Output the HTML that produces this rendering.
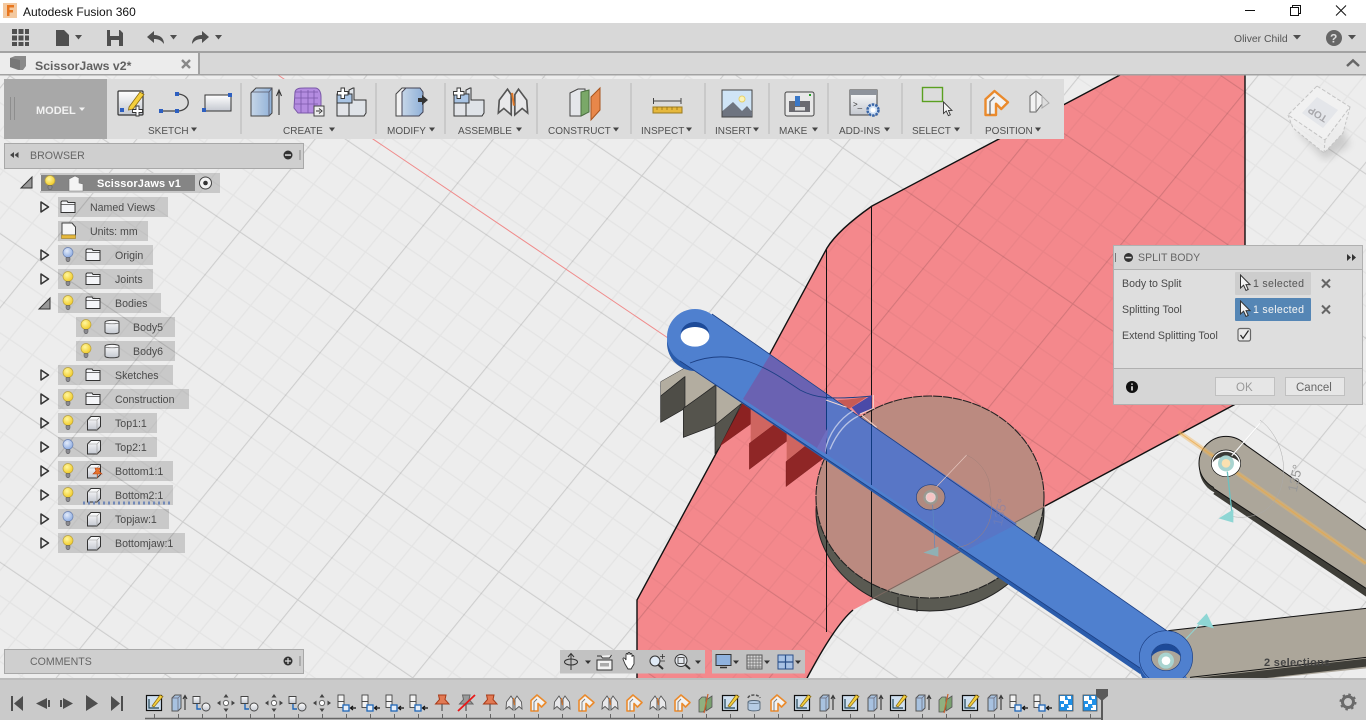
<!DOCTYPE html>
<html><head><meta charset="utf-8"><title>Autodesk Fusion 360</title>
<style>
html,body{margin:0;padding:0;width:1366px;height:720px;overflow:hidden;background:#ededed}
svg{display:block;position:absolute;left:0;top:0}
text{font-family:"Liberation Sans",sans-serif;font-size:11px;fill:#4a4a4a}
.tb{font-size:10px;fill:#505050}
.tr{font-size:10.6px;fill:#4a4a4a}
</style></head><body>
<svg width="1366" height="720" viewBox="0 0 1366 720" xmlns="http://www.w3.org/2000/svg">
<defs>
<pattern id="grid" patternUnits="userSpaceOnUse" width="100" height="100" patternTransform="matrix(1.15 .78 .86 -1.06 1158 198)">
<path d="M20 0V100M40 0V100M60 0V100M80 0V100M0 20H100M0 40H100M0 60H100M0 80H100" stroke="#000" stroke-opacity=".04" stroke-width=".9" fill="none"/>
<path d="M0 0V100M0 0H100" stroke="#000" stroke-opacity=".13" stroke-width="1.6" fill="none"/>
</pattern>
<clipPath id="redc"><path d="M1120 75L1245 75L1245 399L853 610Q835 625 806 680L637 680L637 600L827 248Q838 230 872 206Z"/></clipPath>
<filter id="bl"><feGaussianBlur stdDeviation="4"/></filter>
<linearGradient id="gb" x1="0" y1="0" x2="1" y2="0"><stop offset="0" stop-color="#c6d6e8"/><stop offset="1" stop-color="#8fb0d8"/></linearGradient>
<linearGradient id="gw" x1="0" y1="0" x2="0" y2="1"><stop offset="0" stop-color="#fff"/><stop offset="1" stop-color="#c4c8d0"/></linearGradient>
<radialGradient id="gy" cx=".4" cy=".35" r=".7"><stop offset="0" stop-color="#fff7a0"/><stop offset="1" stop-color="#f0c820"/></radialGradient>
<radialGradient id="gbb" cx=".4" cy=".35" r=".7"><stop offset="0" stop-color="#e4ecfa"/><stop offset="1" stop-color="#88a8e0"/></radialGradient>

<symbol id="bulby" viewBox="0 0 12 16"><circle cx="6" cy="5.5" r="5" fill="url(#gy)" stroke="#b8a040" stroke-width=".7"/><path d="M4 10.5h4v2.6l-1 1.6h-2l-1-1.6z" fill="#8a8a90" stroke="#555" stroke-width=".5"/></symbol>
<symbol id="bulbb" viewBox="0 0 12 16"><circle cx="6" cy="5.5" r="5" fill="url(#gbb)" stroke="#6a80b0" stroke-width=".7"/><path d="M4 10.5h4v2.6l-1 1.6h-2l-1-1.6z" fill="#8a8a90" stroke="#555" stroke-width=".5"/></symbol>
<symbol id="folder" viewBox="0 0 16 14"><path d="M1 3V12.5H15V2.5H8L7 1H2L1 2Z" fill="#f4f5f8" stroke="#333" stroke-width="1"/><path d="M1 4.5H15" stroke="#333" stroke-width=".7"/></symbol>
<symbol id="bodyc" viewBox="0 0 16 16"><path d="M1.500 5L5 1.500H14.500V11.500L11 15H1.500Z" fill="url(#gw)" stroke="#333" stroke-width="1"/><path d="M11 15V5H1.500M11 5L14.500 1.500" stroke="#999" stroke-width=".6" fill="none"/></symbol>
<symbol id="cyl" viewBox="0 0 16 16"><path d="M1 3.200C1 .8 15 .8 15 3.200V13C15 15.400 1 15.400 1 13Z" fill="url(#gw)" stroke="#444" stroke-width="1"/><path d="M1 3.200C1 5.400 15 5.400 15 3.200" stroke="#666" stroke-width=".6" fill="none"/></symbol>
<symbol id="arr" viewBox="0 0 10 12"><path d="M1 1L8.500 6L1 11Z" fill="#ececec" stroke="#333" stroke-width="1.500" stroke-linejoin="round"/></symbol>

<symbol id="t-sk" viewBox="0 0 24 24"><rect x="4.500" y="4.500" width="15" height="15" fill="#cfe0f0" stroke="#111" stroke-width="1.200"/><path d="M7 8V17H17" stroke="#245" stroke-width="1.200" fill="none"/><path d="M10 15L18 4L21 5.500L12 16Z" fill="#f4d040" stroke="#8a6a10" stroke-width=".7"/></symbol>
<symbol id="t-ex" viewBox="0 0 24 24"><path d="M6 7L9 4H15V17L12 20H6Z" fill="#a8c2e0" stroke="#555" stroke-width="1"/><path d="M12 20V7H6M12 7L15 4" stroke="#667" stroke-width=".7" fill="none"/><path d="M19 19V6M17 8L19 4.500L21 8" stroke="#333" stroke-width="1.100" fill="none"/></symbol>
<symbol id="t-cb" viewBox="0 0 24 24"><path d="M3 5.500h7v7h-7z" fill="url(#gw)" stroke="#444" stroke-width=".9"/><circle cx="16" cy="16" r="4" fill="url(#gw)" stroke="#444" stroke-width=".9"/><path d="M7 13V18H11" stroke="#1f66b8" stroke-width="1.400" fill="none"/></symbol>
<symbol id="t-mv" viewBox="0 0 24 24"><path d="M12 3L14.500 6.500H9.500ZM12 21L14.500 17.500H9.500ZM3 12L6.500 9.500V14.500ZM21 12L17.500 9.500V14.500Z" fill="#444"/><circle cx="12" cy="12" r="2.600" fill="#fff" stroke="#666"/></symbol>
<symbol id="t-al" viewBox="0 0 24 24"><rect x="4" y="4" width="6" height="6.500" fill="#f2f2f2" stroke="#444" stroke-width=".9"/><rect x="4" y="10.500" width="6" height="6" fill="#f2f2f2" stroke="#444" stroke-width=".9"/><rect x="9" y="14" width="6" height="6" fill="#e6eef8" stroke="#1f66b8" stroke-width="1.300"/><path d="M22 17H17M19 15L16.500 17L19 19" stroke="#111" stroke-width="1.200" fill="none"/></symbol>
<symbol id="t-pin" viewBox="0 0 24 24"><path d="M8.500 4H16L15 8.500L19 13H5.500L9.500 8.500Z" fill="#e27a54" stroke="#a83a18" stroke-width="1"/><path d="M12 13V20" stroke="#555" stroke-width="1.200"/></symbol>
<symbol id="t-xp" viewBox="0 0 24 24"><path d="M8.500 4H16L15 8.500L19 13H5.500L9.500 8.500Z" fill="#9a9a9a" stroke="#666" stroke-width="1"/><path d="M12 13V20" stroke="#555" stroke-width="1.200"/><path d="M4 20L21 4" stroke="#e81818" stroke-width="1.800"/></symbol>
<symbol id="t-jt" viewBox="0 0 24 24"><path d="M4 18L4.500 11L9 5L11 8V19L7 15.500Z" fill="#e8e8ea" stroke="#555" stroke-width=".9"/><path d="M20 18L19.500 11L15 5L13 8V19L17 15.500Z" fill="#e8e8ea" stroke="#555" stroke-width=".9"/><path d="M11.500 7L12.500 14" stroke="#e07828" stroke-width="1.100"/></symbol>
<symbol id="t-or" viewBox="0 0 24 24"><path d="M5 20V9.500L11 4L20 11.500L15.500 16L12 12.500V20Z" fill="#f2f2f2" stroke="#ea8a2c" stroke-width="1.600" stroke-linejoin="round"/><path d="M8 20V11L11 8" stroke="#777" stroke-width=".9" fill="none"/></symbol>
<symbol id="t-cn" viewBox="0 0 24 24"><path d="M5 9L8 6H12V18L9 21H5Z" fill="#90b080" stroke="#555" stroke-width=".8"/><path d="M12 9L18 5V16L12 20Z" fill="#7aa070" stroke="#555" stroke-width=".8"/><path d="M14 3L10 22" stroke="#c8602a" stroke-width="1.200"/></symbol>
<symbol id="t-rv" viewBox="0 0 24 24"><path d="M6 11C6 9 18 9 18 11V18C18 20.500 6 20.500 6 18Z" fill="#b6cce4" stroke="#567" stroke-width=".9"/><path d="M6 11C6 13 18 13 18 11" stroke="#567" stroke-width=".7" fill="none"/><path d="M6 7C7 3 17 3 18 7" stroke="#555" stroke-width="1.600" stroke-dasharray="3 1.500" fill="none"/></symbol>
<symbol id="t-pt" viewBox="0 0 24 24"><rect x="5" y="4" width="14" height="16" fill="#1e90e8" stroke="#555" stroke-width=".8"/><path d="M6 5h5v4h3v4h-4v3h-3v-3h3v-3h-4zM13 5h4v3h-3zM14 14h4v5h-5v-2h2z" fill="#fff"/></symbol>
<symbol id="cur" viewBox="0 0 12 18"><path d="M1.500 1V14L4.600 11.200L7 16.500L9.200 15.500L7 10.600H11Z" fill="#f4f4f4" stroke="#333" stroke-width="1"/></symbol>
</defs>

<!-- viewport -->
<rect x="0" y="75" width="1366" height="605" fill="#ededed"/>
<path d="M1120 75L1245 75L1245 399L853 610Q835 625 806 680L637 680L637 600L827 248Q838 230 872 206Z" fill="#f4888c"/>
<rect x="0" y="75" width="1366" height="605" fill="url(#grid)"/>
<path d="M278 75L668 338" stroke="#f08a8a" stroke-width="1"/>
<path d="M1120 75L872 206Q838 230 827 248L637 600V680M1245 75V399M1245 399L1045 506M806 680Q835 625 853 610" fill="none" stroke="#111" stroke-width="1.400"/>

<!-- disc -->
<ellipse cx="930" cy="511" rx="114" ry="100" fill="#5a5a52" stroke="#222" stroke-width="1"/>
<path d="M898 597V611M917 599V612" stroke="#222" stroke-width=".8"/>
<ellipse cx="930" cy="497" rx="114" ry="101" fill="#aca69a"/>
<g clip-path="url(#redc)"><ellipse cx="930" cy="497" rx="114" ry="101" fill="#bb8a80"/></g>
<ellipse cx="930" cy="497" rx="114" ry="101" fill="none" stroke="#222" stroke-width="1.100" stroke-dasharray="9 1"/>
<path d="M1044 507L870 600" stroke="#7a6860" stroke-width="1"/>

<!-- teeth -->
<g transform="translate(640 290) scale(.33333)">
<path d="M62 275L150 225L310 340L225 405V285L133 355V260L62 318Z" fill="#b3ada0" stroke="#333" stroke-width="1.500"/>
<path d="M62 318L135 260V355L130 442V358L62 397Z" fill="#4e4d47" stroke="#222" stroke-width="2"/>
<path d="M130 355L228 285V405L130 442Z" fill="#55544d" stroke="#222" stroke-width="2"/>
<path d="M225 405L305 340L240 470L225 490Z" fill="#55544d" stroke="#222" stroke-width="2"/>
<path d="M240 468L308 340L335 320V400L240 468Z" fill="#8c2222" stroke="#6a1515" stroke-width="1"/>
<path d="M332 350L445 425V372L332 460Z" fill="#cf6560"/>
<path d="M328 460L445 372V450L328 538Z" fill="#8f2626" stroke="#6a1515" stroke-width="1"/>
<path d="M440 430L520 480L440 515Z" fill="#cf6560"/>
<path d="M438 515L550 425V505L438 590Z" fill="#8f2626" stroke="#6a1515" stroke-width="1"/>
<path d="M592 330C620 330 655 325 682 320L625 358Z" fill="#c75a55"/>
</g>

<!-- vertical lines -->
<path d="M826.500 249V632M871.500 206V597" stroke="#111" stroke-width="1"/>

<!-- blue bar -->
<g fill="#2b5cab">
<circle cx="695" cy="343" r="28"/>
<circle cx="1166" cy="665" r="27"/>
<path d="M712 319L1166 638L1140 674L690 368Z"/>
</g>
<g fill="#4f80cf">
<circle cx="695" cy="337" r="28"/>
<circle cx="1166" cy="659" r="27"/>
<path d="M712 314L1170 633L1140 668L680 361Z"/>
</g>
<path d="M770 355L826 394V454L743 399Z" fill="#6a62b2"/>
<path d="M826 394L1017 524L967 550L826 454Z" fill="#5876c6"/>
<path d="M712 314L1170 633M1140 668L680 361" stroke="#1c3f84" stroke-width=".8" fill="none"/>
<path d="M826.500 394V454M871.500 425V485" stroke="#0f3a80" stroke-width="1"/>
<path d="M690 363C735 345 770 370 800 390C815 398 830 400 872 396" fill="none" stroke="#1c3f84" stroke-width=".9"/>

<g transform="translate(640 290) scale(.33333)">
<!-- pin hole -->
<ellipse cx="165" cy="139" rx="43" ry="31" fill="#fff"/>
<path d="M122 132C128 84 202 84 208 132C196 104 134 104 122 132Z" fill="#1d4a98"/>
<!-- wedge & arcs -->
<path d="M635 352L695 315V358L655 375Z" fill="#4a4aa8"/>
<path d="M558 330L620 352M700 315V355L660 372M665 375L710 412" stroke="#f4d8d0" stroke-width="3" fill="none"/>
<path d="M555 485C565 430 600 385 640 362M570 478C590 430 620 395 655 378" stroke="#c8d0ea" stroke-width="4" fill="none" opacity=".85"/>
<path d="M530 475L565 410L555 490Z" fill="#6e6ec0"/>
<!-- pivot -->
<ellipse cx="872" cy="622" rx="43" ry="38" fill="#b08a80" stroke="#1c3f84" stroke-width="2"/>
<circle cx="872" cy="622" r="22" fill="#9a9a92"/>
<circle cx="872" cy="622" r="14" fill="#f6c4c4" stroke="#ddd" stroke-width="2"/>
<path d="M878 645L885 780" stroke="#5a88c0" stroke-width="2"/>
<path d="M850 788L895 770V800Z" fill="#8fb0b4"/>
<path d="M890 590L980 495" stroke="#e6c8c0" stroke-width="2"/>
<path d="M980 495A120 120 0 0 1 1050 620A120 120 0 0 1 955 772" stroke="#a08078" stroke-width="1.500" fill="none"/>
<text x="0" y="0" transform="translate(1085 710) rotate(-78)" style="font-size:40px;fill:#7a80b0;opacity:.5">135°</text>
</g>

<!-- right arms -->
<g transform="translate(1100 420) scale(.33333)">
<circle cx="378" cy="145" r="80" fill="#3f3e38"/>
<path d="M430 85L798 345V530L340 222Z" fill="#3f3e38"/>
<circle cx="378" cy="130" r="81" fill="#aca69a" stroke="#111" stroke-width="3"/>
<path d="M430 70L798 330V505L340 205Z" fill="#aca69a"/>
<path d="M430 70L798 330M340 205L798 505" stroke="#111" stroke-width="3" fill="none"/>
<path d="M235 35L798 430" stroke="#f0b860" stroke-width="14" opacity=".45"/>
<path d="M235 35L798 430" stroke="#f0a840" stroke-width="3" opacity=".7"/>
<ellipse cx="378" cy="130" rx="44" ry="40" fill="#fff" stroke="#111" stroke-width="2"/>
<path d="M338 128C345 85 410 85 418 128C405 105 350 105 338 128Z" fill="#3a3a36"/>
<circle cx="378" cy="130" r="24" fill="#a9d4d0"/><circle cx="378" cy="130" r="13" fill="#fbe0b0"/>
<path d="M382 155L398 298" stroke="#6cc0c0" stroke-width="4"/>
<path d="M356 295L400 268V308Z" fill="#8ed6d4"/>
<path d="M395 108L480 10" stroke="#fff" stroke-width="3"/>
<path d="M480 0C560 60 580 200 500 268C470 290 430 295 400 290" stroke="#aaa" stroke-width="1.500" fill="none"/>
<text transform="translate(590 218) rotate(-78)" style="font-size:40px;fill:#999">135°</text>
<path d="M205 632L798 565V745L270 800Z" fill="#aca69a"/>
<path d="M205 632L798 565" stroke="#111" stroke-width="3"/>
<path d="M270 772L798 712" stroke="#111" stroke-width="3"/>
<path d="M270 776L798 716V740L270 800Z" fill="#3f3e38"/>
<path d="M320 580L342 625L290 612Z" fill="#8ed6d4"/>
<path d="M250 665L320 590" stroke="#8ed6d4" stroke-width="3"/>
<circle cx="198" cy="712" r="80" fill="#4f80cf" stroke="#1c3f84" stroke-width="2"/>
<ellipse cx="198" cy="712" rx="44" ry="40" fill="#aca69a" stroke="#1c3f84" stroke-width="2"/>
<path d="M155 710C160 660 235 660 242 710C225 685 170 685 155 710Z" fill="#1d4a98"/>
<circle cx="198" cy="722" r="24" fill="#a9d4d0"/><circle cx="198" cy="722" r="13" fill="#fff"/>
</g>
<text x="1264" y="666" style="font-weight:bold;fill:#444;letter-spacing:.3px">2 selections</text>

<!-- view cube -->
<path d="M1296 130L1325 160L1350 145L1340 125Z" fill="#000" opacity=".14" filter="url(#bl)"/>
<path d="M1317 86L1350 107L1343 133L1324 153L1293 128L1288 115Z" fill="#f0f0f0" fill-opacity=".9"/>
<path d="M1317 86L1350 107L1325 140L1288 115Z" fill="#f1f1f1" stroke="#c4c4c4" stroke-width="1" stroke-dasharray="4 2"/>
<path d="M1288 115L1293 128L1324 153L1343 133L1350 107M1325 140L1324 153" fill="none" stroke="#c4c4c4" stroke-width="1" stroke-dasharray="3 2"/>
<path d="M1317 97L1338 110L1323 128L1302 113Z" fill="#e4e6ea"/>
<text transform="translate(1328 117) rotate(212)" style="font-size:10px;font-weight:bold;fill:#a8a8ac">TOP</text>

<!-- title bar -->
<rect x="0" y="0" width="1366" height="23" fill="#fff"/>
<rect x="3" y="3" width="14" height="15" fill="#f3c9a0"/>
<path d="M7 5H14V7.500H9.500V10H13V12.500H9.500V16H7Z" fill="#e8761e"/>
<text x="23" y="16" style="font-size:12px;fill:#111">Autodesk Fusion 360</text>
<path d="M1245 10.500H1255" stroke="#111" stroke-width="1"/>
<path d="M1290.500 7.500H1298.500V15.500H1290.500ZM1292.500 7.500V5.500H1300.500V13.500H1298.500" fill="none" stroke="#111"/>
<path d="M1336 5.500L1346 15.500M1346 5.500L1336 15.500" stroke="#111"/>

<!-- quick bar -->
<rect x="0" y="23" width="1366" height="29" fill="#d8d8d8"/>
<rect x="0" y="51" width="1366" height="2" fill="#a2a2a2"/>
<g fill="#4f4f4f">
<path d="M12 29h5v5h-5zM18.500 29h5v5h-5zM25 29h4v5h-4zM12 35.500h5v5h-5zM18.500 35.500h5v5h-5zM25 35.500h4v5h-4zM12 42h5v4h-5zM18.500 42h5v4h-5zM25 42h4v4h-4z"/>
<path d="M56 30H64L69 35V46H56Z"/><path d="M75 35H82L78.500 39.500Z"/>
<path d="M107 30H120L123 33V46H107ZM110 30V36H119V30ZM111 40V46H119V40Z" fill-rule="evenodd"/>
<path d="M147 37L154 31V35C160 35 164 38 164 44C161 40 158 39 154 39V43Z"/><path d="M170 35H177L173.500 39.500Z"/>
<path d="M209 37L202 31V35C196 35 192 38 192 44C195 40 198 39 202 39V43Z"/><path d="M215 35H222L218.500 39.500Z"/>
<path d="M1293 35H1301L1297 39.500Z"/><path d="M1348 35H1356L1352 39.500Z"/>
</g>
<text x="1234" y="42" style="font-size:10.400px;fill:#555">Oliver Child</text>
<circle cx="1334" cy="38" r="8" fill="#666"/>
<text x="1330" y="42.500" style="font-size:12px;font-weight:bold;fill:#ddd">?</text>

<!-- tab row -->
<rect x="0" y="53" width="1366" height="21" fill="#d8d8d8"/>
<rect x="0" y="53" width="198" height="21" fill="#ececec"/>
<rect x="198" y="53" width="2" height="21" fill="#a2a2a2"/>
<rect x="0" y="74" width="1366" height="1.500" fill="#a2a2a2"/>
<path d="M10 58L15 56H26V66L23 70H18L10 67Z" fill="#8a8a8a"/><path d="M10 58L20 60V70L10 67Z" fill="#777"/>
<text x="35" y="70" style="font-size:12.300px;font-weight:bold;fill:#606060">ScissorJaws v2*</text>
<path d="M182 60L190 68M190 60L182 68" stroke="#888" stroke-width="2.400"/>
<path d="M1347 66L1353 60.500L1359 66" stroke="#666" stroke-width="2.500" fill="none"/>

<!-- toolbar -->
<rect x="4" y="79" width="1060" height="60" fill="#dcdcdc"/>
<rect x="4" y="79" width="103" height="60" fill="#a8a8a8"/>
<path d="M10.500 97V120M14.500 97V120" stroke="#8e8e8e" stroke-width="1"/>
<text x="36" y="114" style="font-weight:bold;fill:#f2f2f2">MODEL</text>
<path d="M79 107.500H85L82 111Z" fill="#f2f2f2"/>
<g stroke="#c9c9c9" stroke-width="2">
<path d="M241 83V134M376 83V134M445 83V134M537 83V134M631 83V134M705 83V134M769 83V134M828 83V134M902 83V134M971 83V134"/>
</g>
<text x="148" y="134" class="tb">SKETCH</text><text x="283" y="134" class="tb">CREATE</text><text x="387" y="134" class="tb">MODIFY</text><text x="458" y="134" class="tb">ASSEMBLE</text><text x="548" y="134" class="tb">CONSTRUCT</text><text x="641" y="134" class="tb">INSPECT</text><text x="715" y="134" class="tb">INSERT</text><text x="779" y="134" class="tb">MAKE</text><text x="839" y="134" class="tb">ADD-INS</text><text x="912" y="134" class="tb">SELECT</text><text x="985" y="134" class="tb">POSITION</text>
<path fill="#444" d="M191 127.500h6l-3 4zM329 127.500h6l-3 4zM429 127.500h6l-3 4zM516 127.500h6l-3 4zM613 127.500h6l-3 4zM686 127.500h6l-3 4zM753 127.500h6l-3 4zM812 127.500h6l-3 4zM884 127.500h6l-3 4zM954 127.500h6l-3 4zM1035 127.500h6l-3 4z"/>

<!-- sketch icons -->
<rect x="118" y="91" width="25" height="24" rx="1" fill="url(#gw)" stroke="#333" stroke-width="1.200"/>
<path d="M129 107L140 92L144 94.500L133 109L128.500 110Z" fill="#f4cf3c" stroke="#8a6a10" stroke-width=".8"/>
<rect x="120" y="108" width="4" height="4" fill="#2d5fc0"/>
<path d="M136 106h3v3.500h3.500v3h-3.500v3.500h-3v-3.500h-3.500v-3h3.500z" fill="#fff" stroke="#333" stroke-width=".9"/>
<path d="M161 111H177C192 111 192 94 177 94" stroke="#444" stroke-width="1.300" fill="none"/>
<path d="M159 109h4v4h-4zM175 109h4v4h-4zM175 92h4v4h-4z" fill="#2d5fc0"/>
<rect x="205" y="95" width="26" height="16" fill="url(#gw)" stroke="#333" stroke-width="1"/>
<path d="M202 108h4v4h-4zM228 93h4v4h-4z" fill="#2d5fc0"/>

<!-- create -->
<path d="M251 93L256 88H272V113L269 116H251Z" fill="url(#gb)" stroke="#444" stroke-width="1"/>
<path d="M269 116V92H251M269 92L272 88" fill="none" stroke="#556" stroke-width=".8"/>
<path d="M279 115V92M276.500 96L279 90L281.500 96" stroke="#333" stroke-width="1.100" fill="none"/>
<path d="M295 92C296 88 300 88 305 88H315C319 88 321 92 321 97V110L318 113H298L294 108Z" fill="#b48ce0" stroke="#7a58a8" stroke-width="1"/>
<path d="M295 98H318M295 104H318M301 90V113M308 90V113M314 90V113M295 92H318" stroke="#7a58a8" stroke-width=".8" fill="none"/>
<rect x="314" y="106" width="10" height="10" fill="#eee" stroke="#444"/><path d="M316 111H320M319 108.500L322 111L319 113.500" stroke="#333" fill="none"/>
<path d="M337 103H353V116H337Z" fill="#e2e4e8" stroke="#333"/><path d="M349 103V90L353 88H354V100H366V113L364 116H349V103" fill="#dfe3e8" stroke="#333"/>
<path d="M337 94H352V103H337Z" fill="#a9c4e4" stroke="#333"/>
<path d="M341 88h3.500v3.500h3.500v3.500h-3.500v3.500h-3.500v-3.500h-3.500v-3.500h3.500z" fill="#fff" stroke="#333" stroke-width=".9"/>

<!-- modify -->
<path d="M396 94L402 88H418L422 92V112L418 116H396Z" fill="#f2f2f2" stroke="#444"/>
<path d="M402 116V92L406 88H420L423 92V112L419 116Z" fill="url(#gb)" stroke="#445" stroke-width="1"/>
<path d="M418 98h4v-3l6 5-6 5v-3h-4z" fill="#333"/>

<!-- assemble -->
<path d="M454 103H470V116H454Z" fill="#e2e4e8" stroke="#333"/><path d="M466 103V90L470 88H471V100H484V113L482 116H466V103" fill="#dfe3e8" stroke="#333"/>
<path d="M454 94H469V103H454Z" fill="#a9c4e4" stroke="#333"/>
<path d="M457 88h3.500v3.500h3.500v3.500h-3.500v3.500h-3.500v-3.500h-3.500v-3.500h3.500z" fill="#fff" stroke="#333" stroke-width=".9"/>
<use href="#t-jt" x="491" y="80" width="44" height="44"/>

<!-- construct -->
<path d="M570 93L578 89H585V114L581 116H570Z" fill="#e4e6ea" stroke="#444"/><path d="M581 92L589 90V112L581 116Z" fill="#7aa868" stroke="#4c7040"/>
<path d="M591 97L600 88V110L591 120Z" fill="#e8874a" stroke="#a8541e"/>

<!-- inspect -->
<path d="M653 101H681M653.500 98V104M681 98V104" stroke="#444" stroke-width="1"/>
<rect x="653" y="107" width="29" height="6" fill="#e6b83c" stroke="#9a7a20"/>
<path d="M657 107v3M662 107v3M667 107v3M672 107v3M677 107v3" stroke="#8a6a10" stroke-width=".7"/>

<!-- insert -->
<rect x="722" y="90" width="30" height="27" fill="#cfe4f6" stroke="#444"/>
<circle cx="742" cy="99" r="3" fill="#fbf4b8" stroke="#e8d26a"/>
<path d="M722.500 116.500V111L733 102L742 111L747 106L752 112V116.500Z" fill="#6e7480"/>

<!-- make -->
<rect x="785" y="92" width="29" height="24" rx="2" fill="#e8e8e8" stroke="#444"/>
<rect x="789" y="101" width="21" height="11" fill="#6a6a70"/>
<rect x="795" y="96" width="5" height="10" fill="#3a78c8"/><rect x="795" y="107" width="10" height="3.500" fill="#ddd"/><rect x="809" y="94" width="2" height="2" fill="#22a022"/>

<!-- add-ins -->
<rect x="850" y="90" width="27" height="25" fill="url(#gw)" stroke="#444"/><rect x="850" y="90" width="27" height="5" fill="#8e939c"/>
<text x="853" y="107" style="font-size:8px;fill:#333">&gt;_</text>
<circle cx="873" cy="110" r="5.500" fill="#cfe0f4" stroke="#3a66a8" stroke-width="2.500" stroke-dasharray="2.500 1"/>
<circle cx="873" cy="110" r="2.500" fill="#fff"/>

<!-- select -->
<rect x="922.500" y="87.500" width="20" height="14" fill="none" stroke="#5aa020" stroke-width="1.400"/>
<use href="#cur" x="942" y="101" width="11" height="16"/>

<!-- position -->
<use href="#t-or" x="978" y="85" width="36" height="36"/>
<path d="M1030 112V96L1036 91L1042 96V104L1036 112Z" fill="#f2f2f2" stroke="#666"/><path d="M1036 91V112" stroke="#888"/><path d="M1042 96L1049 103L1042 108Z" fill="#ddd" stroke="#aaa"/>

<!-- browser -->
<rect x="4.500" y="143.500" width="299" height="25" fill="#cfcfcf" stroke="#a8a8a8"/>
<path d="M10 155L14 152V158ZM14.500 155L18.500 152V158Z" fill="#444"/>
<text x="30" y="159" class="tr" style="fill:#666">BROWSER</text>
<circle cx="288" cy="155" r="4.500" fill="#333"/><rect x="285" y="154.300" width="6" height="1.500" fill="#ddd"/>
<path d="M300 150V160" stroke="#888"/>

<!-- comments -->
<rect x="4.500" y="649.500" width="299" height="24" fill="#cfcfcf" stroke="#a8a8a8"/>
<text x="30" y="665" class="tr" style="fill:#666">COMMENTS</text>
<circle cx="288" cy="661" r="4.500" fill="#333"/><path d="M285 661H291M288 658V664" stroke="#ddd" stroke-width="1.200"/>
<path d="M300 656V666" stroke="#888"/>

<!-- tree -->
<g fill="#000" fill-opacity=".15">
<rect x="195" y="173" width="25" height="20"/>
<rect x="58" y="197" width="110" height="20"/><rect x="58" y="221" width="90" height="20"/>
<rect x="58" y="245" width="95" height="20"/><rect x="58" y="269" width="95" height="20"/><rect x="58" y="293" width="103" height="20"/>
<rect x="76" y="317" width="99" height="20"/><rect x="76" y="341" width="99" height="20"/>
<rect x="58" y="365" width="115" height="20"/><rect x="58" y="389" width="131" height="20"/><rect x="58" y="413" width="99" height="20"/><rect x="58" y="437" width="99" height="20"/>
<rect x="58" y="461" width="115" height="20"/><rect x="58" y="485" width="115" height="20"/><rect x="58" y="509" width="111" height="20"/><rect x="58" y="533" width="127" height="20"/>
</g>
<rect x="41" y="175" width="154" height="16" fill="#858585"/>
<rect x="40" y="173" width="155" height="2" fill="#c9c9c9"/><rect x="40" y="191" width="155" height="2" fill="#c9c9c9"/>
<path d="M32 177V188H21Z" fill="#999" stroke="#333" stroke-width="1"/>
<use href="#bulby" x="44" y="175" width="12" height="16"/>
<path d="M69 179L75 176L79 178V183L83 184V191H69Z" fill="#f4f4f4" stroke="#777" stroke-width=".6"/>
<text x="97" y="187" style="font-weight:bold;fill:#fff;letter-spacing:.15px">ScissorJaws v1</text>
<circle cx="205.500" cy="183" r="6" fill="#f2f2f2" stroke="#444"/><circle cx="205.500" cy="183" r="2.300" fill="#333"/>

<use href="#arr" x="40" y="201" width="10" height="12"/><use href="#folder" x="60" y="200" width="16" height="14"/><text x="90" y="211" class="tr">Named Views</text>
<path d="M62 223H72L75.500 227V235H62Z" fill="#f6f6f6" stroke="#444"/><rect x="61.500" y="235" width="14" height="3.500" fill="#e6b83c" stroke="#9a7a20" stroke-width=".6"/><text x="90" y="235" class="tr">Units: mm</text>
<use href="#arr" x="40" y="249" width="10" height="12"/><use href="#bulbb" x="62" y="247" width="12" height="16"/><use href="#folder" x="85" y="248" width="16" height="14"/><text x="115" y="259" class="tr">Origin</text>
<use href="#arr" x="40" y="273" width="10" height="12"/><use href="#bulby" x="62" y="271" width="12" height="16"/><use href="#folder" x="85" y="272" width="16" height="14"/><text x="115" y="283" class="tr">Joints</text>
<path d="M50 298V309H39Z" fill="#999" stroke="#333" stroke-width="1"/><use href="#bulby" x="62" y="295" width="12" height="16"/><use href="#folder" x="85" y="296" width="16" height="14"/><text x="115" y="307" class="tr">Bodies</text>
<use href="#bulby" x="80" y="319" width="12" height="16"/><use href="#cyl" x="104" y="319" width="16" height="16"/><text x="133" y="331" class="tr">Body5</text>
<use href="#bulby" x="80" y="343" width="12" height="16"/><use href="#cyl" x="104" y="343" width="16" height="16"/><text x="133" y="355" class="tr">Body6</text>
<use href="#arr" x="40" y="369" width="10" height="12"/><use href="#bulby" x="62" y="367" width="12" height="16"/><use href="#folder" x="85" y="368" width="16" height="14"/><text x="115" y="379" class="tr">Sketches</text>
<use href="#arr" x="40" y="393" width="10" height="12"/><use href="#bulby" x="62" y="391" width="12" height="16"/><use href="#folder" x="85" y="392" width="16" height="14"/><text x="115" y="403" class="tr">Construction</text>
<use href="#arr" x="40" y="417" width="10" height="12"/><use href="#bulby" x="62" y="415" width="12" height="16"/><use href="#bodyc" x="86" y="415" width="16" height="16"/><text x="115" y="427" class="tr">Top1:1</text>
<use href="#arr" x="40" y="441" width="10" height="12"/><use href="#bulbb" x="62" y="439" width="12" height="16"/><use href="#bodyc" x="86" y="439" width="16" height="16"/><text x="115" y="451" class="tr">Top2:1</text>
<use href="#arr" x="40" y="465" width="10" height="12"/><use href="#bulby" x="62" y="463" width="12" height="16"/><use href="#bodyc" x="86" y="463" width="16" height="16"/><path d="M95 468H100L99 471L102 474H93L96 471ZM97.500 474V478" fill="#e8742c" stroke="#b03a10" stroke-width=".6"/><text x="115" y="475" class="tr">Bottom1:1</text>
<use href="#arr" x="40" y="489" width="10" height="12"/><use href="#bulby" x="62" y="487" width="12" height="16"/><use href="#bodyc" x="86" y="487" width="16" height="16"/><text x="115" y="499" class="tr">Bottom2:1</text>
<path d="M83 503L171 503" stroke="#7088b8" stroke-width="3" stroke-dasharray="2 3"/>
<use href="#arr" x="40" y="513" width="10" height="12"/><use href="#bulbb" x="62" y="511" width="12" height="16"/><use href="#bodyc" x="86" y="511" width="16" height="16"/><text x="115" y="523" class="tr">Topjaw:1</text>
<use href="#arr" x="40" y="537" width="10" height="12"/><use href="#bulby" x="62" y="535" width="12" height="16"/><use href="#bodyc" x="86" y="535" width="16" height="16"/><text x="115" y="547" class="tr">Bottomjaw:1</text>

<!-- split body panel -->
<rect x="1113.500" y="245.500" width="249" height="159" fill="#dedede" stroke="#b0b0b0"/>
<rect x="1114" y="246" width="248" height="23" fill="#d4d4d4"/>
<path d="M1114 269.500H1362M1114 368.500H1362" stroke="#b0b0b0"/>
<rect x="1114" y="369" width="248" height="35" fill="#d6d6d6"/>
<path d="M1115.500 253V262" stroke="#777"/>
<circle cx="1128.500" cy="257.500" r="4.500" fill="#333"/><rect x="1125.500" y="256.800" width="6" height="1.500" fill="#ddd"/>
<text x="1138" y="261" class="tr" style="fill:#666">SPLIT BODY</text>
<path d="M1347 254L1351 257.500L1347 261ZM1352 254L1356 257.500L1352 261Z" fill="#333"/>
<text x="1122" y="287" class="tr">Body to Split</text>
<text x="1122" y="313" class="tr">Splitting Tool</text>
<text x="1122" y="339" class="tr">Extend Splitting Tool</text>
<rect x="1235" y="272" width="76" height="23" rx="1" fill="#cdcdcd"/>
<use href="#cur" x="1239" y="274" width="12" height="18"/>
<text x="1253" y="287" class="tr" style="fill:#555;letter-spacing:.3px">1 selected</text>
<rect x="1235" y="298" width="76" height="23" rx="1" fill="#5586b5"/>
<use href="#cur" x="1239" y="300" width="12" height="18"/>
<text x="1253" y="313" class="tr" style="fill:#f4f4f4;letter-spacing:.3px">1 selected</text>
<path d="M1322 279.500L1330 287.500M1330 279.500L1322 287.500M1322 305.500L1330 313.500M1330 305.500L1322 313.500" stroke="#666" stroke-width="2"/>
<rect x="1238" y="328.500" width="12.500" height="12.500" rx="2" fill="#e8e8e8" stroke="#666" stroke-width="1.200"/>
<path d="M1240.500 335L1243 338.500L1248.500 330.500" stroke="#222" stroke-width="1.200" fill="none"/>
<circle cx="1132" cy="387" r="6" fill="#111"/><path d="M1132 383.500V384.800M1132 386.200V390.500" stroke="#fff" stroke-width="1.500"/>
<rect x="1215.500" y="377.500" width="59" height="18" fill="#e6e6e6" stroke="#c0c0c0"/>
<text x="1236" y="391" style="font-size:11.500px;fill:#9a9a9a">OK</text>
<rect x="1285.500" y="377.500" width="59" height="18" fill="#e6e6e6" stroke="#c0c0c0"/>
<text x="1296" y="391" style="font-size:11.500px;fill:#666">Cancel</text>

<!-- view toolbar -->
<rect x="560" y="650" width="145" height="23.500" fill="#c2c2c2"/>
<rect x="712" y="650" width="93" height="23.500" fill="#c2c2c2"/>
<rect x="0" y="678" width="1366" height="2" fill="#bcbcbc"/>
<path d="M571 654V670M568 657L571 653.500L574 657" stroke="#333" fill="none"/><ellipse cx="571" cy="662" rx="6.500" ry="3" fill="none" stroke="#333"/>
<path d="M597 660h15v10h-15zM597 656h4l1.500 2h7l2-3" fill="#f2f2f2" stroke="#333"/><rect x="600" y="663" width="9" height="3.500" fill="#aaa"/>
<path d="M625 664L623 659C623 657 625 658 626 660V655C626 653 628 653 628 655V654C628 652 630 652 630 654V655C630 653 632 653 632 655V657C632 655 634 655 634 657V664L631 669H628Z" fill="#fff" stroke="#333" stroke-width=".9"/>
<circle cx="655" cy="661" r="5" fill="#dfeaf6" stroke="#333"/><path d="M658.500 665L663 669" stroke="#333" stroke-width="2"/><path d="M660 656.500H665M662.500 654V659M660 661H665" stroke="#333" stroke-width=".8"/>
<circle cx="681" cy="660.500" r="6" fill="#e4e8ee" stroke="#333"/><rect x="678" y="657.500" width="6" height="6" fill="none" stroke="#555"/><path d="M685.500 665L690 669" stroke="#333" stroke-width="2"/>
<rect x="716" y="654.500" width="15" height="11" fill="#8fb2de" stroke="#333"/><path d="M720 667.500H727" stroke="#333" stroke-width="1.500"/>
<rect x="747" y="655" width="15" height="14" fill="#d6d6d6" stroke="#555"/><path d="M750 655V669M753 655V669M756 655V669M759 655V669M747 658H762M747 661H762M747 664H762M747 667H762" stroke="#666" stroke-width=".7"/>
<rect x="778" y="655" width="15" height="14" fill="#a8c2e4" stroke="#2a4f88"/><path d="M785.500 655V669M778 662H793" stroke="#2a4f88" stroke-width="1.200"/>
<path fill="#333" d="M585 660.500h6l-3 3.500zM695 660.500h6l-3 3.500zM733 660.500h6l-3 3.500zM764 660.500h6l-3 3.500zM795 660.500h6l-3 3.500z"/>

<!-- timeline -->
<rect x="0" y="680" width="1366" height="40" fill="#cacaca"/>
<g fill="#4e4e4e">
<path d="M11 696H13V711H11ZM23 696V711L14 703.500Z"/>
<path d="M47 698V709L36 703.500ZM48 700H50V707H48Z"/>
<path d="M60 700H62V707H60ZM63 698V709L73 703.500Z"/>
<path d="M86 695V711L98 703.500Z"/>
<path d="M111 696V711L120 703.500ZM121 696H123V711H121Z"/>
</g>
<path d="M145 718.500H1101" stroke="#666" stroke-width="1.500"/>
<path d="M154.500 714V718M178.500 714V718M202.500 714V718M226.500 714V718M250.500 714V718M274.500 714V718M298.500 714V718M322.500 714V718M346.500 714V718M370.500 714V718M394.500 714V718M418.500 714V718M442.500 714V718M466.500 714V718M490.500 714V718M514.500 714V718M538.500 714V718M562.500 714V718M586.500 714V718M610.500 714V718M634.500 714V718M658.500 714V718M682.500 714V718M706.500 714V718M730.500 714V718M754.500 714V718M778.500 714V718M802.500 714V718M826.500 714V718M850.500 714V718M874.500 714V718M898.500 714V718M922.500 714V718M946.500 714V718M970.500 714V718M994.500 714V718M1018.500 714V718M1042.500 714V718M1066.500 714V718M1090.500 714V718" stroke="#666"/>
<use href="#t-sk" x="142" y="691" width="24" height="24"/><use href="#t-ex" x="166" y="691" width="24" height="24"/><use href="#t-cb" x="190" y="691" width="24" height="24"/><use href="#t-mv" x="214" y="691" width="24" height="24"/><use href="#t-cb" x="238" y="691" width="24" height="24"/><use href="#t-mv" x="262" y="691" width="24" height="24"/><use href="#t-cb" x="286" y="691" width="24" height="24"/><use href="#t-mv" x="310" y="691" width="24" height="24"/><use href="#t-al" x="334" y="691" width="24" height="24"/><use href="#t-al" x="358" y="691" width="24" height="24"/><use href="#t-al" x="382" y="691" width="24" height="24"/><use href="#t-al" x="406" y="691" width="24" height="24"/><use href="#t-pin" x="430" y="691" width="24" height="24"/><use href="#t-xp" x="454" y="691" width="24" height="24"/><use href="#t-pin" x="478" y="691" width="24" height="24"/><use href="#t-jt" x="502" y="691" width="24" height="24"/><use href="#t-or" x="526" y="691" width="24" height="24"/><use href="#t-jt" x="550" y="691" width="24" height="24"/><use href="#t-or" x="574" y="691" width="24" height="24"/><use href="#t-jt" x="598" y="691" width="24" height="24"/><use href="#t-or" x="622" y="691" width="24" height="24"/><use href="#t-jt" x="646" y="691" width="24" height="24"/><use href="#t-or" x="670" y="691" width="24" height="24"/><use href="#t-cn" x="694" y="691" width="24" height="24"/><use href="#t-sk" x="718" y="691" width="24" height="24"/><use href="#t-rv" x="742" y="691" width="24" height="24"/><use href="#t-or" x="766" y="691" width="24" height="24"/><use href="#t-sk" x="790" y="691" width="24" height="24"/><use href="#t-ex" x="814" y="691" width="24" height="24"/><use href="#t-sk" x="838" y="691" width="24" height="24"/><use href="#t-ex" x="862" y="691" width="24" height="24"/><use href="#t-sk" x="886" y="691" width="24" height="24"/><use href="#t-ex" x="910" y="691" width="24" height="24"/><use href="#t-cn" x="934" y="691" width="24" height="24"/><use href="#t-sk" x="958" y="691" width="24" height="24"/><use href="#t-ex" x="982" y="691" width="24" height="24"/><use href="#t-al" x="1006" y="691" width="24" height="24"/><use href="#t-al" x="1030" y="691" width="24" height="24"/><use href="#t-pt" x="1054" y="691" width="24" height="24"/><use href="#t-pt" x="1078" y="691" width="24" height="24"/>
<path d="M1096 689H1108V696L1102 701L1096 696Z" fill="#5a5a5a"/><rect x="1101" y="699" width="2" height="21" fill="#5a5a5a"/>
<circle cx="1348" cy="702" r="5.500" fill="none" stroke="#6a6a6a" stroke-width="3"/><circle cx="1348" cy="702" r="7.500" fill="none" stroke="#6a6a6a" stroke-width="2" stroke-dasharray="2.500 3.400"/>
</svg>
</body></html>
